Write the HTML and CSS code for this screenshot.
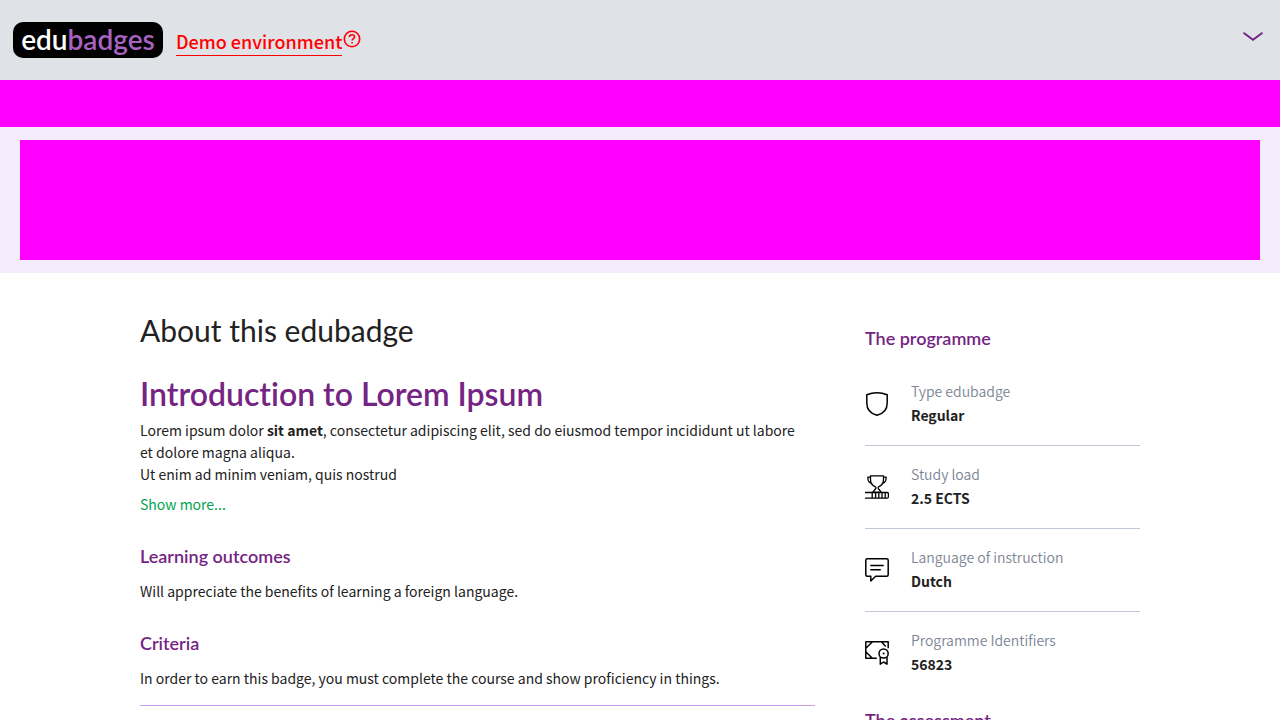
FILE: index.html
```html
<!DOCTYPE html>
<html lang="en">
<head>
<meta charset="utf-8">
<meta name="viewport" content="width=device-width, initial-scale=1">
<title>Edubadges</title>
<link rel="stylesheet" href="styles.css">
</head>
<body>
<header class="site-header">
  <a class="logo" href="#" aria-label="edubadges"><span>edu</span><span class="logo-accent">badges</span></a>
  <a class="demo" href="#">Demo environment</a>
  <svg class="help" viewBox="0 0 18 18" aria-hidden="true"><circle cx="9" cy="9" r="7.700"/><path d="M6.500 7.100C6.500 5.600 7.500 4.800 9 4.800s2.500.9 2.500 2.200c0 1.600-2.400 1.700-2.400 3.600"/><path d="M9.100 12v1.600"/></svg>
  <button class="menu" type="button" aria-label="Open menu"><svg viewBox="0 0 20 10" aria-hidden="true"><path d="M1.200 1.200 10 7.800l8.800-6.600"/></svg></button>
</header>
<div class="banner"></div>
<div class="hero"><div class="hero-card"></div></div>
<main class="page">
  <article class="about">
    <h1>About this edubadge</h1>
    <h2>Introduction to Lorem Ipsum</h2>
    <p>Lorem ipsum dolor <strong>sit amet</strong>, consectetur adipiscing elit, sed do eiusmod tempor incididunt ut labore et dolore magna aliqua.<br>Ut enim ad minim veniam, quis nostrud</p>
    <a class="more" href="#">Show more...</a>
    <h3>Learning outcomes</h3>
    <p>Will appreciate the benefits of learning a foreign language.</p>
    <h3>Criteria</h3>
    <p>In order to earn this badge, you must complete the course and show proficiency in things.</p>
    <hr>
  </article>
  <aside class="details">
    <h3>The programme</h3>
    <dl>
      <div class="fact">
        <svg viewBox="0 0 24 24" aria-hidden="true"><path d="M1.800 2.700Q12-1.200 22.200 2.700V11c0 6.500-4.300 10.800-10.200 12.300C6.100 21.800 1.800 17.500 1.800 11Z"/></svg>
        <div class="fact-text"><dt>Type edubadge</dt><dd>Regular</dd></div>
      </div>
      <div class="fact">
        <svg class="fine" viewBox="0 0 24 24" aria-hidden="true"><path d="M5.500.8h13v3.700c0 4-2.500 6.500-5.300 7.700v1.300l3 3.700H7.800l3-3.700v-1.300C8 11 5.500 8.500 5.500 4.500ZM5.500 2.200H2.800c0 4 1.200 6 4.500 6.300M18.500 2.200h2.700c0 4-1.200 6-4.500 6.300M0 17.500h22q1.400 0 1.400 1.300v3q0 1.300-1.400 1.300H0M7.200 17.500v5.600M10.600 17.500v5.600M13.800 17.500v5.600M17 17.500v5.600M20.200 17.500v5.600"/></svg>
        <div class="fact-text"><dt>Study load</dt><dd>2.5 ECTS</dd></div>
      </div>
      <div class="fact">
        <svg viewBox="0 0 24 24" aria-hidden="true"><path d="M2.300.8h19.400q1.500 0 1.500 1.500v14.400q0 1.500-1.500 1.500H10.700L5.800 23v-4.800H2.300q-1.500 0-1.500-1.500V2.300Q.8.8 2.300.8ZM5.300 7.500h13.400M5.300 11.800h10.500"/></svg>
        <div class="fact-text"><dt>Language of instruction</dt><dd>Dutch</dd></div>
      </div>
      <div class="fact">
        <svg viewBox="0 0 24 24" aria-hidden="true"><path d="M11.800 17.300H.8V.8h22.400v6.500M.8 7.300 7.500.8M.8 10.800l6.500 6.500M16.500.8l4.200 4.700"/><circle cx="18.600" cy="12.500" r="4.600"/><path d="M15.300 16v7.200l3.300-2.200 3.400 2.200V16"/><circle class="dot" cx="18.600" cy="12.500" r="1"/></svg>
        <div class="fact-text"><dt>Programme Identifiers</dt><dd>56823</dd></div>
      </div>
    </dl>
    <h3>The assessment</h3>
  </aside>
</main>
</body>
</html>
```
FILE: styles.css
```css
* { box-sizing: border-box; }
body {
  margin: 0;
  background: #fff;
  color: #222;
  font: 14px/22px "Noto Sans CJK SC", "Noto Sans", sans-serif;
}
a { text-decoration: none; }
h1, h2, h3, p, dl, dd { margin: 0; }
.site-header {
  display: flex;
  align-items: center;
  height: 80px;
  padding: 0 17px 0 13px;
  background: #dfe2e7;
}
.logo {
  display: flex;
  justify-content: center;
  width: 150px;
  height: 36px;
  border-radius: 10px;
  background: #000;
  color: #fff;
  font: 600 28px/34px Lato, sans-serif;
}
.logo-accent { color: #a863c0; }
.demo {
  margin: 6px 0 0 13px;
  padding-bottom: 4px;
  border-bottom: 1px solid #f00;
  color: #f00;
  font-size: 18px;
  font-weight: 500;
  line-height: 20px;
}
.help {
  width: 18px;
  height: 18px;
  margin: 0 0 2px 1px;
  fill: none;
  stroke: #f00;
  stroke-width: 1.600;
}
.menu {
  display: flex;
  margin: 0 0 6px auto;
  padding: 0;
  border: 0;
  background: none;
}
.menu svg {
  width: 20px;
  height: 10px;
  fill: none;
  stroke: #752483;
  stroke-width: 2;
  stroke-linecap: round;
}
.banner { height: 47px; background: #f0f; }
.hero { padding: 13px 20px; background: #f4ebfb; }
.hero-card { height: 120px; background: #f0f; }
.page {
  display: flex;
  gap: 50px;
  max-width: 1040px;
  margin: 0 auto;
  padding: 37px 20px;
}
.about { flex: 1; }
.about p { padding-right: 12px; }
h1, h2, h3 { font-family: Lato, sans-serif; font-variant-ligatures: none; }
h1 { font-size: 30px; font-weight: 400; line-height: 40px; }
h2 { margin: 20px 0 1px; color: #752483; font-size: 32px; font-weight: 600; line-height: 48px; }
h3 { color: #752483; font-size: 18px; font-weight: 600; line-height: 24px; }
.more { display: block; margin-top: 8px; color: #00a551; }
.about h3 { margin: 29px 0 12px; }
hr { height: 1px; margin: 16px 0 0; border: 0; background: #ce9fe6; }
.details { width: 275px; padding-top: 16px; }
.details dl { margin: 13px 0; }
.fact {
  display: flex;
  align-items: center;
  gap: 22px;
  min-height: 83px;
  border-bottom: 1px solid #bec9d4;
}
.fact:last-child { border-bottom-color: transparent; }
.fact svg {
  width: 24px;
  height: 24px;
  fill: none;
  stroke: #000;
  stroke-width: 1.500;
  stroke-linejoin: round;
}
.fact .fine { stroke-width: 1.300; }
.fact .dot { fill: #000; stroke: none; }
.fact-text { padding-bottom: 2px; }
dt { color: #7c8594; font-weight: 350; line-height: 24px; }
dd { font-weight: 700; line-height: 24px; }
```
